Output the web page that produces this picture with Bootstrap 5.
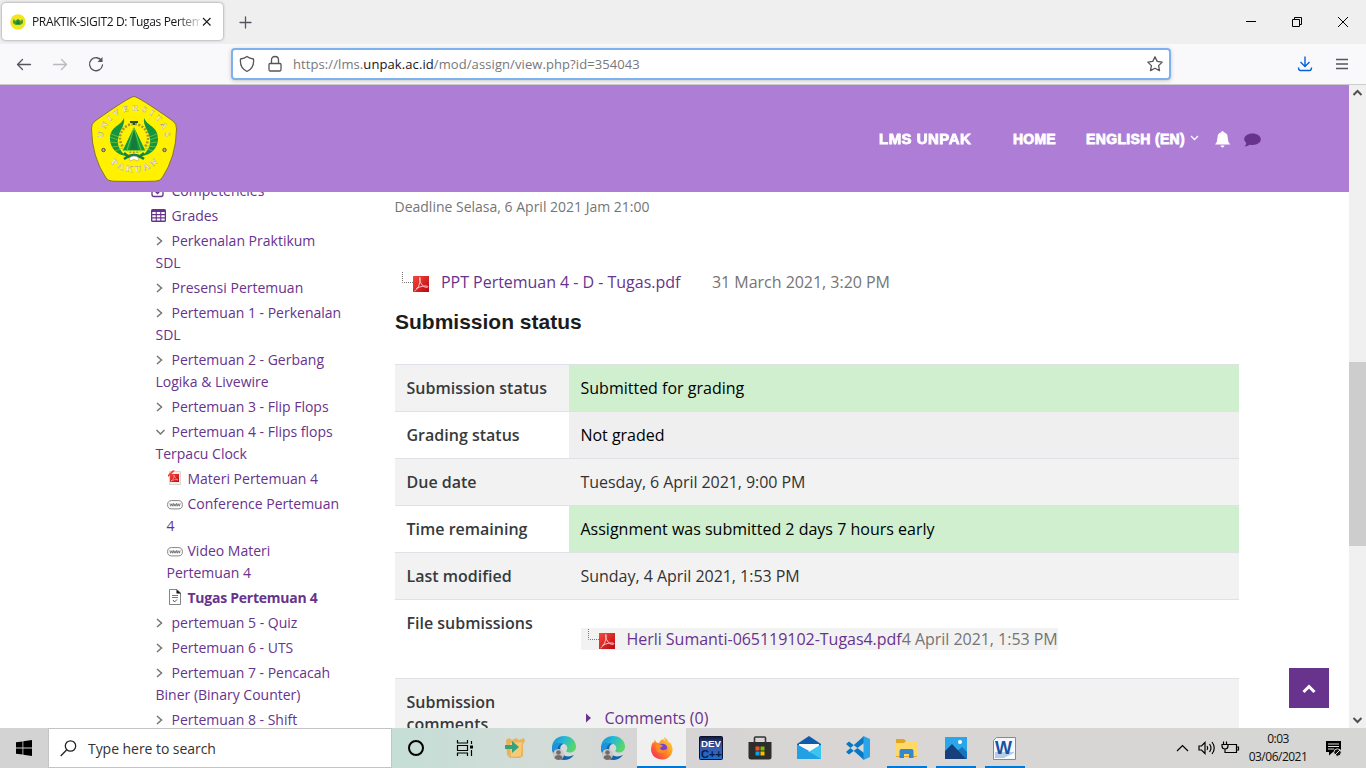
<!DOCTYPE html>
<html lang="en">
<head>
<meta charset="utf-8">
<meta name="viewport" content="width=device-width, initial-scale=1">
<title>PRAKTIK-SIGIT2 D: Tugas Pertemuan 4</title>
<link href="https://cdn.jsdelivr.net/npm/bootstrap@5.3.0/dist/css/bootstrap.min.css" rel="stylesheet">
<style>
body{width:1366px;height:768px;font-family:"Open Sans","Noto Sans",sans-serif;color:#333;background:#fff}
svg{display:block;flex:none}
.line-ico{fill:none;stroke:#55555e;stroke-width:1.3;stroke-linecap:round;stroke-linejoin:round}
.titlebar{height:44px;background:#efefef}
.ff-tab{width:221px;height:37px;margin:3px 0 0 2px;background:#fff;border-radius:4px;box-shadow:0 0 3px rgba(60,60,80,.6);padding-left:8px}
.ff-title{width:168px;margin-left:6px;font-size:12px;color:#15141a;letter-spacing:-.36px;-webkit-mask-image:linear-gradient(90deg,#000 145px,transparent 172px)}
.toolbar{height:41px;background:#f9f9fb;border-bottom:1px solid #ccc}
.urlbar{width:940px;height:32px;margin-left:125px;border:2px solid #7eb1f0;border-radius:4px;background:#fff;box-shadow:0 1px 4px rgba(0,0,0,.2);padding:0 6px 0 5px;font-size:13px;color:#77777e}
.url-text{letter-spacing:.09px;padding:2px 0 0 1px}
.urlbar b{font-weight:400;color:#15141a}
.view{height:643px}
.page-area{width:1349px}
.site-head{height:107px;background:#ae7dd6;padding-left:91px}
.site-nav{font:bold 14px/20px "Liberation Sans",Arial,sans-serif;color:#fff;-webkit-text-stroke:.8px #fff}
.site-nav .brand-t{display:inline-block;transform:scaleX(1.07);transform-origin:0 50%}
.page-body{height:536px}
.side{width:210px;margin:-12px 0 0 151px;font-size:14px;line-height:22px;color:#68338d}
.side div{padding-bottom:3px;white-space:nowrap}
.side .sec{padding-left:4.5px}
.side .act{padding-left:15.5px}
.side svg{display:inline-block;vertical-align:-2px}
.sec>svg{margin:0 7px 0 -1px;position:relative;top:-1px}
.act>svg{margin-right:5px}
.tugas{letter-spacing:-.25px}
.content-col{width:844px;margin-left:34px}
.purple{color:#68338d}
.muted-t{color:#757575}
.deadline{font-size:14px;line-height:22px;margin:4px 0 0 -.5px}
.file-line{line-height:22px;font-size:16px;white-space:nowrap;letter-spacing:-.03px}
.h-status{font:bold 21px/26px "Liberation Sans",Arial,sans-serif;color:#1c1c1c;margin:16px 0 29px}
.st{font-size:16px;line-height:22px;border-collapse:collapse;table-layout:fixed;width:844px}
.st th,.st td{border-top:1px solid #dee2e6;padding:12px 11.5px;vertical-align:top;height:47px}
.st th{width:174px;font-weight:600;color:#373a3c}
.st td{letter-spacing:-.03px}
.st .odd>*{background:#f2f2f2}
.st td.okc{background:#cfefcf;color:#000;letter-spacing:0}
.st td.nog{background:#efefef;color:#000}
.fbox{background:#f2f2f2;width:477px}
.scroller{width:17px;background:#f0f0f0}
.thumb{width:17px;height:184px;background:#cdcdcd;margin-top:262px}
.to-top{position:absolute;left:1289px;top:583px;width:40px;height:40px;background:#68338d}
.taskbar{height:40px;background:linear-gradient(90deg,#d3d3d3 0,#d3d3d3 48px,#c5ded6 400px,#d3dcd8 540px,#d6d4d4 660px,#d9d6d5 900px,#d6d6d4 1366px)}
.tsearch{width:344px;height:40px;background:#fff;border:1px solid #c4c4c4;font-size:14px;color:#333;padding-left:11px;letter-spacing:-.05px}
.tcell{width:49px;height:40px}
.tcell.early{padding-right:2px}
.tcell.run{background:linear-gradient(#0078d7,#0078d7) center bottom/40px 2px no-repeat}
.tcell.cur{background:linear-gradient(#0078d7,#0078d7) center bottom/100% 2px no-repeat,#f0f0f0}
.clock{font-size:12px;line-height:18px;letter-spacing:-.5px;color:#111;width:66px}
</style>
</head>
<body class="d-flex flex-column overflow-hidden">
<svg width="0" height="0" class="position-absolute">
<defs>
<linearGradient id="red" x2="1" y2="1"><stop offset="0" stop-color="#f8483a"/><stop offset="1" stop-color="#b90714"/></linearGradient>
<linearGradient id="edgeg" x2="1" y2=".4"><stop offset="0" stop-color="#1489d6"/><stop offset=".5" stop-color="#25b8d8"/><stop offset="1" stop-color="#58d66c"/></linearGradient>
<linearGradient id="foxg" x1="1" x2="0" y2="1"><stop offset="0" stop-color="#ffe14a"/><stop offset=".5" stop-color="#ff8a1c"/><stop offset="1" stop-color="#f5156c"/></linearGradient>
<linearGradient id="devg" x2="0" y2="1"><stop offset="0" stop-color="#10183c"/><stop offset=".45" stop-color="#3c55a8"/><stop offset="1" stop-color="#1674d8"/></linearGradient>
<symbol id="pdf" viewBox="0 0 16 16"><path d="M0 0h16v16H0z" fill="url(#red)"/><path d="M1.500 15c3-1.500 5.500-6.500 5.700-12.500C7.300.8 6.400 1 6.600 3c.3 3.500 3 7.500 5.700 8.200 2 .5 3.600-.3 2-1-2.500-.8-7.500.3-11 2.300" fill="none" stroke="#fbd3d0" stroke-width=".9"/></symbol>
<symbol id="tree" viewBox="0 0 14 14"><path d="M.5 1v10.500H12" fill="none" stroke="#777" stroke-dasharray="1 1"/></symbol>
<symbol id="chev" viewBox="0 0 10 12"><path d="M2 2 6.500 6 2 10" fill="none" stroke="#757575" stroke-width="1.500"/></symbol>
<symbol id="www" viewBox="0 0 16 12"><rect x=".6" y="1.600" width="14.800" height="8.300" rx="4.100" fill="#fff" stroke="#777" stroke-width=".9"/><path d="m2.800 4.300.8 2.900.9-2.400.9 2.400.8-2.900M6.300 4.300l.8 2.900.9-2.400.9 2.400.8-2.900M9.800 4.300l.8 2.900.9-2.400.9 2.400.8-2.900" fill="none" stroke="#555" stroke-width=".7"/></symbol>
<symbol id="edge" viewBox="0 0 24 24"><path d="M0 12C0 4 6 0 12 0c7 0 12 5 12 10.500 0 4-3 6-6.500 6-2.500 0-3.500-1-3-2 1.500-2 1-5-2-6.500C8 6 2 8 0 12" fill="url(#edgeg)"/><path d="M0 12C1.500 7 8 6 12 8c-4 0-5 6-2 10 3 3 8 3 12 1-2 3-6 5-10 5C5 24 0 19 0 12" fill="#1263ad"/><path d="M0 12c1-4 6-6 10-4.500C6 9 5 12 6 15H1q-1-1-1-3" fill="#1e93dd"/><circle cx="6.500" cy="18.500" r="5.500" fill="#c9c9c9"/><circle cx="6.500" cy="16.500" r="2.300" fill="#746b66"/><path d="M2.500 22c0-4 8-4 8 0-2 2.600-6 2.600-8 0" fill="#746b66"/></symbol>
<symbol id="logo" viewBox="0 0 86 86">
<path d="M43 .5Q47 .5 82 25q3.800 3 3.500 8-.5 28-14.500 49-2 3-7 3.200-21 .6-42 0-5-.2-7-3.200Q1 61 .5 33q-.5-5 3.500-8Q39 .5 43 .5z" fill="#fff100" stroke="#6c622b" stroke-width=".8"/>
<path id="arcTop" d="M11.500 46a31.500 31.500 0 0 1 63 0" fill="none"/><path id="arcBot" d="M14 60a34 34 0 0 0 58 0" fill="none"/>
<g font-family="Liberation Serif,serif" font-weight="bold" font-size="8" fill="#fff" stroke="#a9a27a" stroke-width=".3"><text><textPath href="#arcTop" textLength="90" startOffset="4">UNIVERSITAS</textPath></text><text font-size="9"><textPath href="#arcBot" textLength="52" startOffset="9">PAKUAN</textPath></text></g>
<path d="M33 22c-4 9-14 8-14 21 0 9 7 16 16 17-7-6-10-12-7-21 1-5 6-9 5-17zM53 22c4 9 14 8 14 21 0 9-7 16-16 17 7-6 10-12 7-21-1-5-6-9-5-17z" fill="#12963f"/>
<g stroke="#8ec531" stroke-width=".7" fill="none"><path d="m20 38 8 3m-9 0 8 3m-7 2 8 1m-7 4 9-1m-6 5 8-3M66 38l-8 3m9 0-8 3m7 2-8 1m7 4-9-1m6 5-8-3"/></g>
<circle cx="43" cy="42" r="14" fill="none" stroke="#a49439" stroke-width="2.500" stroke-dasharray="2 1.500"/>
<path d="m43 30 12 25H31z" fill="#0b9b42" stroke="#fff100"/><path d="m43 32-4 22h8z" fill="#19783d"/><path d="m43 32-7 22m7-22 7 22" stroke="#87c935" stroke-width=".8"/>
<path d="M33 63q10-8 20 0M33 57q10 10 20 0" fill="none" stroke="#138343" stroke-width="2.500"/><path d="M38 62q5-4 10 0l-1 3q-4-3-8 0z" fill="#fff" stroke="#a99b58" stroke-width=".5"/><path d="M39 26h8m-4 0v3" stroke="#28552b" stroke-width="2"/>
<g fill="#b9b4a0" stroke="#535038"><circle cx="12.500" cy="54" r="1.700"/><circle cx="73.500" cy="54" r="1.700"/></g>
</symbol>
</defs>
</svg>

<header class="titlebar d-flex">
  <div class="ff-tab d-flex align-items-center">
    <svg width="16" height="16" viewBox="0 0 16 16"><circle cx="8" cy="8" r="7.700" fill="#f1e51e"/><path d="M4 5c-2 3-1 5 2 6h4c3-1 4-3 2-6l-1 2-3-2-3 2z" fill="#429d35"/><path d="m8 5 2 5H6z" fill="#1b7f3c"/></svg>
    <div class="ff-title text-nowrap overflow-hidden">PRAKTIK-SIGIT2 D: Tugas Pertem</div>
    <svg width="10" height="10" viewBox="0 0 10 10" style="margin-left:2px"><path d="m1 1 7.500 7.500m0-7.500L1 8.500" stroke="#222" stroke-width="1.200"/></svg>
  </div>
  <svg class="mt-3 line-ico" style="margin-left:16px" width="14" height="14" viewBox="0 0 14 14"><path d="M1 6.500h11M6.500 1v11"/></svg>
  <svg class="ms-auto" width="120" height="44" viewBox="0 0 120 44" fill="none" stroke="#000"><path d="M0 21.500h10M46.500 19.500h7v7h-7zM48.500 19v-1.500h7v7H54M92 17l10 10m0-10L92 27"/></svg>
</header>

<nav class="toolbar d-flex align-items-center">
  <svg class="line-ico" style="margin-left:16px" width="90" height="20" viewBox="0 0 90 20"><path d="M1.500 10.500h13M6.500 5.500l-5 5 5 5"/><path d="M37.500 10.500h13M45.500 5.500l5 5-5 5" stroke="#b9b9bf"/><path d="M85.700 7A6.500 6.500 0 1 0 86.500 11"/><path d="M86.500 3v5h-5z" fill="#55555e" stroke="none"/></svg>
  <div class="urlbar d-flex align-items-center">
    <svg class="line-ico" width="54" height="20" viewBox="0 0 54 20"><path d="M9 2.500Q11.500 4.500 15.500 5q1 9-6.500 12.500Q1.500 14 2.500 5q4-.5 6.500-2.500zM32 9.500h10q1 0 1 1v5q0 1.500-1 1.500H32q-1 0-1-1.500v-5q0-1 1-1M33.500 9.500V6q0-3.500 3.500-3.500T40.500 6v3.500"/></svg>
    <span class="url-text">https://lms.<b>unpak.ac.id</b>/mod/assign/view.php?id=354043</span>
    <svg class="line-ico ms-auto" width="16" height="16" viewBox="0 0 16 16"><path d="m8 .8 2.200 4.600 5 .7-3.600 3.500.9 5-4.500-2.400-4.500 2.400.9-5L.8 6.100l5-.7z"/></svg>
  </div>
  <svg class="ms-auto" style="margin-right:17px" width="52" height="18" viewBox="0 0 52 18" fill="none" stroke-width="1.300"><path d="M8 1.500v10M3.500 7 8 11.500 12.500 7M1.500 12.500q0 3 2 3h9q2 0 2-3" stroke="#0561dc" stroke-width="1.400"/><path d="M39 4.500h12m-12 4.500h12m-12 4.500h12" stroke="#55555e"/></svg>
</nav>

<div class="view d-flex position-relative">
  <div class="page-area overflow-hidden">
    <div class="site-head d-flex align-items-center">
      <svg width="86" height="86"><use href="#logo"/></svg>
      <div class="site-nav d-flex align-items-center" style="margin-left:702px">
        <span style="width:134px;letter-spacing:.45px"><span class="brand-t">LMS UNPAK</span></span>
        <span style="width:73px;letter-spacing:.2px">HOME</span>
        <span style="width:104px;letter-spacing:.35px">ENGLISH (EN)</span>
      </div>
      <svg width="74" height="20" viewBox="0 0 74 20"><path d="m1 7 3.500 3.500L8 7" fill="none" stroke="#fff" stroke-width="1.300"/><path d="M32.500 2q1 0 1.200 1.300 4 1 4 5.200 0 4.500 2.600 7H25q2.500-2.500 2.500-7 0-4.200 3.800-5.200Q31.500 2 32.500 2zM30.500 16.500h4q-.3 2-2 2t-2-2" fill="#fff"/><path d="M62.500 4.500c4.800 0 8.300 2.500 8.300 5.800s-3.500 5.700-8.300 5.700q-1.500 0-2.800-.3-2 1.800-5.200 1.800 1.600-1.500 1.800-3.500-2.100-1.400-2.100-3.700c0-3.300 3.500-5.800 8.300-5.800" fill="#68338d"/></svg>
    </div>
    <main class="page-body d-flex overflow-hidden">
      <aside class="side flex-none">
        <div><svg width="14" height="13" viewBox="0 0 14 13"><path d="M1 2v7.500q0 2 2 2h7q2 0 2-2V2M4.500 6.500l2 2 3-3" fill="none" stroke="#68338d" stroke-width="1.300"/></svg><span style="margin-left:6.500px">Competencies</span></div>
        <div><svg width="15" height="13" viewBox="0 0 15 13" style="vertical-align:-1px"><rect width="15" height="13" rx="1.500" fill="#68338d"/><path d="M1.300 3h3.400v2H1.300zm4.500 0h3.400v2H5.800zm4.500 0h3.400v2h-3.400zM1.300 6.200h3.400v2H1.300zm4.500 0h3.400v2H5.800zm4.500 0h3.400v2h-3.400zM1.300 9.400h3.400v2H1.300zm4.500 0h3.400v2H5.800zm4.500 0h3.400v2h-3.400z" fill="#fff"/></svg><span style="margin-left:5.500px">Grades</span></div>
        <div class="sec"><svg width="10" height="12"><use href="#chev"/></svg>Perkenalan Praktikum<br>SDL</div>
        <div class="sec"><svg width="10" height="12"><use href="#chev"/></svg>Presensi Pertemuan</div>
        <div class="sec"><svg width="10" height="12"><use href="#chev"/></svg>Pertemuan 1 - Perkenalan<br>SDL</div>
        <div class="sec"><svg width="10" height="12"><use href="#chev"/></svg>Pertemuan 2 - Gerbang<br>Logika &amp; Livewire</div>
        <div class="sec"><svg width="10" height="12"><use href="#chev"/></svg>Pertemuan 3 - Flip Flops</div>
        <div class="sec"><svg width="10" height="12" viewBox="0 0 10 12"><path d="M1.500 4l4 4 4-4" fill="none" stroke="#757575" stroke-width="1.500"/></svg>Pertemuan 4 - Flips flops<br>Terpacu Clock</div>
        <div class="act"><svg width="16" height="16" viewBox="0 0 16 16"><path d="M2.500 1.500h11v13h-11z" fill="#f5f0ef" stroke="#ddd4d2"/><path d="M3 4h9v8H3z" fill="url(#red)"/><path d="M1 5 5.500.500H8L1 7z" fill="#e63a2e"/><path d="M4 11c3-2 3-4 3-6 1 3 2 4 4 5-2-1-5 0-7 1" fill="none" stroke="#f5aaa4" stroke-width=".7"/></svg>Materi Pertemuan 4</div>
        <div class="act"><svg width="16" height="12"><use href="#www"/></svg>Conference Pertemuan<br>4</div>
        <div class="act"><svg width="16" height="12"><use href="#www"/></svg>Video Materi<br>Pertemuan 4</div>
        <div class="act fw-bold"><svg width="16" height="16" viewBox="0 0 16 16"><path d="M2.500.500H10L13.500 4v11.500h-11z" fill="#fff" stroke="#777" stroke-width=".9"/><path d="M9.500.500v4H14z" fill="#111"/><path d="M5 6.500h6m-6 2h6" stroke="#777"/><path d="m6 11 1.500 2L10 10.500" fill="none" stroke="#555"/></svg><span class="tugas">Tugas Pertemuan 4</span></div>
        <div class="sec"><svg width="10" height="12"><use href="#chev"/></svg>pertemuan 5 - Quiz</div>
        <div class="sec"><svg width="10" height="12"><use href="#chev"/></svg>Pertemuan 6 - UTS</div>
        <div class="sec"><svg width="10" height="12"><use href="#chev"/></svg>Pertemuan 7 - Pencacah<br>Biner (Binary Counter)</div>
        <div class="sec"><svg width="10" height="12"><use href="#chev"/></svg>Pertemuan 8 - Shift</div>
      </aside>
      <section class="content-col flex-shrink-0">
        <div class="deadline muted-t">Deadline Selasa, 6 April 2021 Jam 21:00</div>
        <div class="file-line d-flex" style="margin-top:53px;padding-left:7px">
          <svg width="11" height="14" viewBox="0 0 11 14"><use href="#tree" width="14" height="14"/></svg><svg style="margin-top:5px" width="16" height="16"><use href="#pdf"/></svg>
          <span class="purple" style="margin-left:12px;width:271px">PPT Pertemuan 4 - D - Tugas.pdf</span><span class="muted-t">31 March 2021, 3:20 PM</span>
        </div>
        <h3 class="h-status">Submission status</h3>
        <table class="st">
          <tr class="odd"><th>Submission status</th><td class="okc">Submitted for grading</td></tr>
          <tr><th>Grading status</th><td class="nog">Not graded</td></tr>
          <tr class="odd"><th>Due date</th><td style="letter-spacing:-.07px">Tuesday, 6 April 2021, 9:00 PM</td></tr>
          <tr><th>Time remaining</th><td class="okc">Assignment was submitted 2 days 7 hours early</td></tr>
          <tr class="odd"><th>Last modified</th><td>Sunday, 4 April 2021, 1:53 PM</td></tr>
          <tr style="height:79px"><th>File submissions</th><td style="padding-top:28px">
            <div class="fbox file-line d-flex" style="padding-left:7px"><svg width="11" height="14" viewBox="0 0 11 14"><use href="#tree" width="14" height="14"/></svg><svg style="margin-top:5px" width="16" height="16"><use href="#pdf"/></svg><span class="purple" style="margin-left:12px">Herli Sumanti-065119102-Tugas4.pdf</span><span class="muted-t">4 April 2021, 1:53 PM</span></div></td></tr>
          <tr class="odd" style="height:90px"><th>Submission<br>comments</th><td style="padding-top:28px"><div class="purple d-flex align-items-center"><svg width="24" height="10" viewBox="0 0 24 10"><path d="m5 .5 5 4.500-5 4.500z" fill="#68338d"/></svg>Comments (0)</div></td></tr>
        </table>
      </section>
    </main>
  </div>
  <div class="scroller d-flex flex-column align-items-center">
    <svg width="17" height="15" viewBox="0 0 17 15"><path d="m4.500 10 4-4 4 4" fill="none" stroke="#505050" stroke-width="2"/></svg>
    <div class="thumb"></div>
    <svg class="mt-auto" width="17" height="17" viewBox="0 0 17 17"><path d="m4.500 7 4 4 4-4" fill="none" stroke="#505050" stroke-width="2"/></svg>
  </div>
  <div class="to-top d-flex align-items-center justify-content-center"><svg width="16" height="12" viewBox="0 0 16 12"><path d="m2.500 10 5.500-5.500 5.500 5.500" fill="none" stroke="#fff" stroke-width="3"/></svg></div>
</div>

<footer class="taskbar d-flex align-items-stretch">
  <div class="d-flex align-items-center justify-content-center" style="width:48px"><svg width="16" height="16" viewBox="0 0 16 16"><path d="m0 2.300 6.500-.9v6.200H0zm7.300-1L16 0v7.600H7.300zM0 8.400h6.500v6.200L0 13.700zm7.300 0H16V16l-8.700-1.200z"/></svg></div>
  <div class="tsearch d-flex align-items-center"><svg width="17" height="17" viewBox="0 0 17 17" fill="none" stroke="#222" stroke-width="1.300"><circle cx="10.500" cy="6" r="5.200"/><path d="M6.800 9.800.7 16"/></svg><span style="margin-left:11px">Type here to search</span></div>
  <div class="tcell early d-flex align-items-center justify-content-center"><svg width="18" height="18"><circle cx="9" cy="9" r="7" fill="none" stroke="#000" stroke-width="2"/></svg></div>
  <div class="tcell early d-flex align-items-center justify-content-center"><svg width="18" height="18" viewBox="0 0 18 18" fill="none" stroke="#000" stroke-width="1.200"><path d="M1.500 1v3h10V1M1.500 6.500h10v5h-10zM1.500 17v-3h10v3M15.500 2v3m0 6v6"/><path d="M14 6.500h3v3h-3z" fill="#000" stroke="none"/></svg></div>
  <div class="tcell d-flex align-items-center justify-content-center"><svg width="22" height="22" viewBox="0 0 22 22"><path d="m2 3 3-2 3 2 4-2 3 2 5-2 1 3-2 3v12l-3 2H6l-3-3z" fill="#e9b35b"/><path d="m6 6 12-1-1 14-10 1z" fill="#f5ca78"/><path d="M1 8h7V4l7 6-7 6v-4H1z" fill="#36a27c"/></svg></div>
  <div class="tcell d-flex align-items-center justify-content-center"><svg width="24" height="24"><use href="#edge"/></svg></div>
  <div class="tcell d-flex align-items-center justify-content-center"><svg width="24" height="24"><use href="#edge"/></svg></div>
  <div class="tcell cur d-flex align-items-center justify-content-center"><svg width="24" height="24" viewBox="0 0 24 24"><path d="M5 3q0 2 1.500 3.500L9 7q1-3 4-4 1 1 2 2l-1-4q4 2 5 6l1-1q3 5 2.500 9C21 21 17 23.500 12 23.500S1 20 1 13q0-4 2-7l1 1z" fill="url(#foxg)"/><circle cx="12.500" cy="12.500" r="4.800" fill="#7044d8"/><path d="M6 9c3-1.500 5 0 7 1l-3 2c1 3 5 3 7.500 0 0 4-3 6-6.500 5-4 0-6-4-5-8" fill="#ff8a24"/></svg></div>
  <div class="tcell d-flex align-items-center justify-content-center"><svg width="24" height="24" viewBox="0 0 24 24"><rect x=".5" y=".5" width="23" height="23" rx="1" fill="url(#devg)" stroke="#0b122e"/><g font-family="Liberation Sans,sans-serif" font-weight="bold"><text x="2" y="11" font-size="9.500" textLength="20" lengthAdjust="spacingAndGlyphs" fill="#fff">DEV</text><text x="2" y="22" font-size="11" textLength="21" lengthAdjust="spacingAndGlyphs" fill="#091d48">C++</text></g></svg></div>
  <div class="tcell d-flex align-items-center justify-content-center"><svg width="24" height="24" viewBox="0 0 24 24"><path d="M.5 6h23v15q0 2.500-2.500 2.500H3Q.5 23.500.5 21z" fill="#2d2d2d"/><path d="M6.500 7V2q0-1 1-1h9q1 0 1 1v5" fill="none" stroke="#333" stroke-width="1.600"/><path d="M7.500 10.500h4v4h-4z" fill="#f25022"/><path d="M12.500 10.500h4v4h-4z" fill="#7fba00"/><path d="M7.500 15.500h4v4h-4z" fill="#00a4ef"/><path d="M12.500 15.500h4v4h-4z" fill="#ffb900"/></svg></div>
  <div class="tcell d-flex align-items-center justify-content-center"><svg width="24" height="24" viewBox="0 0 24 24"><path d="M0 8 12 0l12 8v4H0z" fill="#0f5cab"/><path d="M2 8h20v8H2z" fill="#f7f9fb"/><path d="M0 8.500 12 15 0 23z" fill="#1a86d8"/><path d="M24 8.500v14.500H0z" fill="#38c5ef"/><path d="M0 8.500 24 23H0z" fill="#239fe3"/></svg></div>
  <div class="tcell d-flex align-items-center justify-content-center"><svg width="24" height="24" viewBox="0 0 24 24"><path d="m0 8 3-2.500 15 11.500v7zM0 16l3 2.500L18 7V0z" fill="#0877c4"/><path d="m17.500 0 6.500 3v18l-6.500 3z" fill="#2aa5ec"/></svg></div>
  <div class="tcell run d-flex align-items-center justify-content-center"><svg width="23" height="20" viewBox="0 0 23 20"><path d="M1 1h8l2 2h11v16H1z" fill="#e3a621"/><path d="M1 5h8l2-2h11v15H1z" fill="#ffd968"/><path d="M4.500 20v-7q0-2 2-2h10q2 0 2 2v7H14v-4H9v4z" fill="#3488d0"/></svg></div>
  <div class="tcell run d-flex align-items-center justify-content-center"><svg width="22" height="22" viewBox="0 0 22 22"><path d="M0 0h22v22H0z" fill="#2aa6e9"/><path d="m11 15 6-5 5 5v7H11z" fill="#1673bf"/><path d="m0 14 7-7 14 15H0z" fill="#173f7b"/><circle cx="15" cy="5" r="2" fill="#fff"/></svg></div>
  <div class="tcell run d-flex align-items-center justify-content-center"><svg width="23" height="23" viewBox="0 0 23 23"><path d="M3.500.5h19v22H.5v-19z" fill="#f4f8fd" stroke="#6c8eb8"/><path d="M2 15h19v6H2z" fill="#bacce5"/><text x="2" y="17" font-family="Liberation Sans,sans-serif" font-size="18" font-weight="bold" fill="#1952a0">W</text><path d="m11 21 10-5v5z" fill="#fff"/></svg></div>
  <svg class="ms-auto my-auto" width="66" height="20" viewBox="0 0 66 20" fill="none" stroke="#000" stroke-width="1.200"><path d="m1 13 5.500-5.500L12 13M23 8h2.500L29 4.500v11L25.500 12H23zM31 8q1.500 2 0 4m2.500-6q3 4 0 8m2.500-10q4.500 6 0 12M52 6.500h8.500v8h-9.500M61 9h1.500v3H61M47.500 3.500v3m3-3v3M46 6.500h6V8q0 3-3 3t-3-3zM49 11v3.500h2.500"/></svg>
  <div class="clock text-center d-flex flex-column justify-content-center" style="margin-left:3px"><span>0:03</span><span>03/06/2021</span></div>
  <svg class="my-auto" style="margin-left:14px;margin-right:24px" width="17" height="17" viewBox="0 0 17 17"><path d="M1 1h15v11H8l-4 3.500V12H1z"/><path d="M3 4h11M3 6.500h11M3 9h6" stroke="#ddd"/><circle cx="12.500" cy="12.500" r="3.700" fill="#111" stroke="#d6d6d4"/><path d="m10 15 5-5" stroke="#ddd"/></svg>
</footer>
</body>
</html>
